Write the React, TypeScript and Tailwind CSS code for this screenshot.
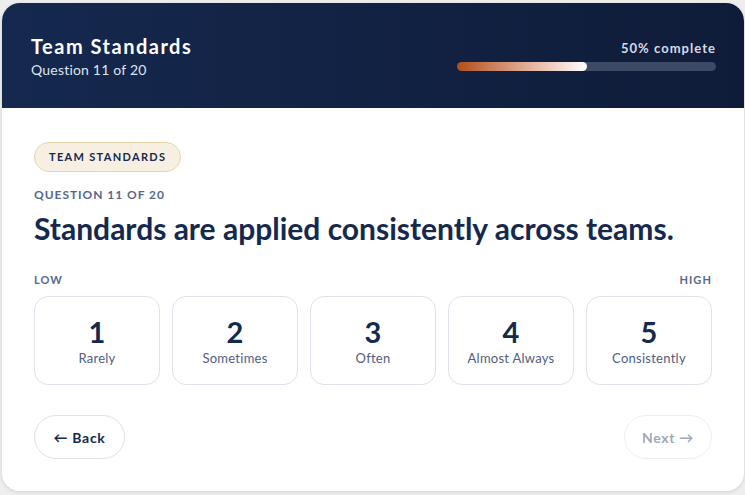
const options = [
  { value: 1, label: 'Rarely' },
  { value: 2, label: 'Sometimes' },
  { value: 3, label: 'Often' },
  { value: 4, label: 'Almost Always' },
  { value: 5, label: 'Consistently' },
];

export default function App() {
  const progress = 50;

  return (
    <div className="min-h-screen bg-[#eeeeef] pl-[2px] pr-[1px] pt-[3px] font-['Lato',sans-serif]">
      <div className="overflow-hidden rounded-[18px] bg-white shadow-[0_1px_4px_rgba(0,0,0,0.12)]">
        {/* header */}
        <div className="flex h-[105px] items-start justify-between bg-gradient-to-r from-[#15284e] to-[#0f1c39] px-[28px] pt-[32px]">
          <div className="pl-[1px]">
            <h1 className="text-[20px] font-bold leading-[22px] tracking-[1.5px] text-white">Team Standards</h1>
            <p className="mt-[5px] text-[14px] leading-[16px] tracking-[0.2px] text-[#dfe4ee]">Question 11 of 20</p>
          </div>
          <div className="flex w-[259px] flex-col items-end pt-[6px]">
            <span className="text-[13px] font-bold leading-[14px] tracking-[0.08em] text-[#d6dbe6]">
              {progress}% complete
            </span>
            <div className="mt-[7px] h-[9px] w-full overflow-hidden rounded-full bg-[#3d4a66]">
              <div
                className="h-full rounded-full bg-gradient-to-r from-[#b24e10] to-white"
                style={{ width: `${progress}%` }}
              />
            </div>
          </div>
        </div>

        {/* body */}
        <div className="px-[32px] pb-[32px] pt-[34px]">
          <span className="inline-flex h-[30px] items-center rounded-full border border-[#e8d6a8] bg-[#f7f0e2] px-[14px] text-[11px] font-bold tracking-[0.12em] text-[#15284e]">
            TEAM STANDARDS
          </span>
          <p className="mt-[16px] text-[12px] font-bold leading-[14px] tracking-[0.08em] text-[#58678a]">
            QUESTION 11 OF 20
          </p>
          <h2 className="mt-[7px] text-[30px] font-bold leading-[38px] text-[#15284e]">
            Standards are applied consistently across teams.
          </h2>

          <div className="mt-[26px] flex justify-between text-[11px] font-bold leading-[14px] tracking-[0.1em] text-[#58678a]">
            <span>LOW</span>
            <span>HIGH</span>
          </div>

          <div className="mt-[9px] grid grid-cols-5 gap-[12px]">
            {options.map((o) => (
              <button
                key={o.value}
                className="flex h-[89px] flex-col items-center justify-center rounded-[14px] border border-[#dfe2ea] bg-white"
              >
                <span className="text-[29px] font-bold leading-[32px] text-[#15284e]">{o.value}</span>
                <span className="mt-[2px] text-[13px] leading-[16px] tracking-[0.02em] text-[#4f5e80]">{o.label}</span>
              </button>
            ))}
          </div>

          <div className="mt-[30px] flex justify-between">
            <button className="h-[44px] w-[91px] rounded-full border border-[#dfe2ea] bg-white text-[14px] font-bold tracking-[0.05em] text-[#15284e]">
              ← Back
            </button>
            <button
              disabled
              className="h-[44px] w-[88px] rounded-full border border-[#eceef2] bg-white text-[14px] font-bold tracking-[0.05em] text-[#a0a8ba]"
            >
              Next →
            </button>
          </div>
        </div>
      </div>
    </div>
  );
}
